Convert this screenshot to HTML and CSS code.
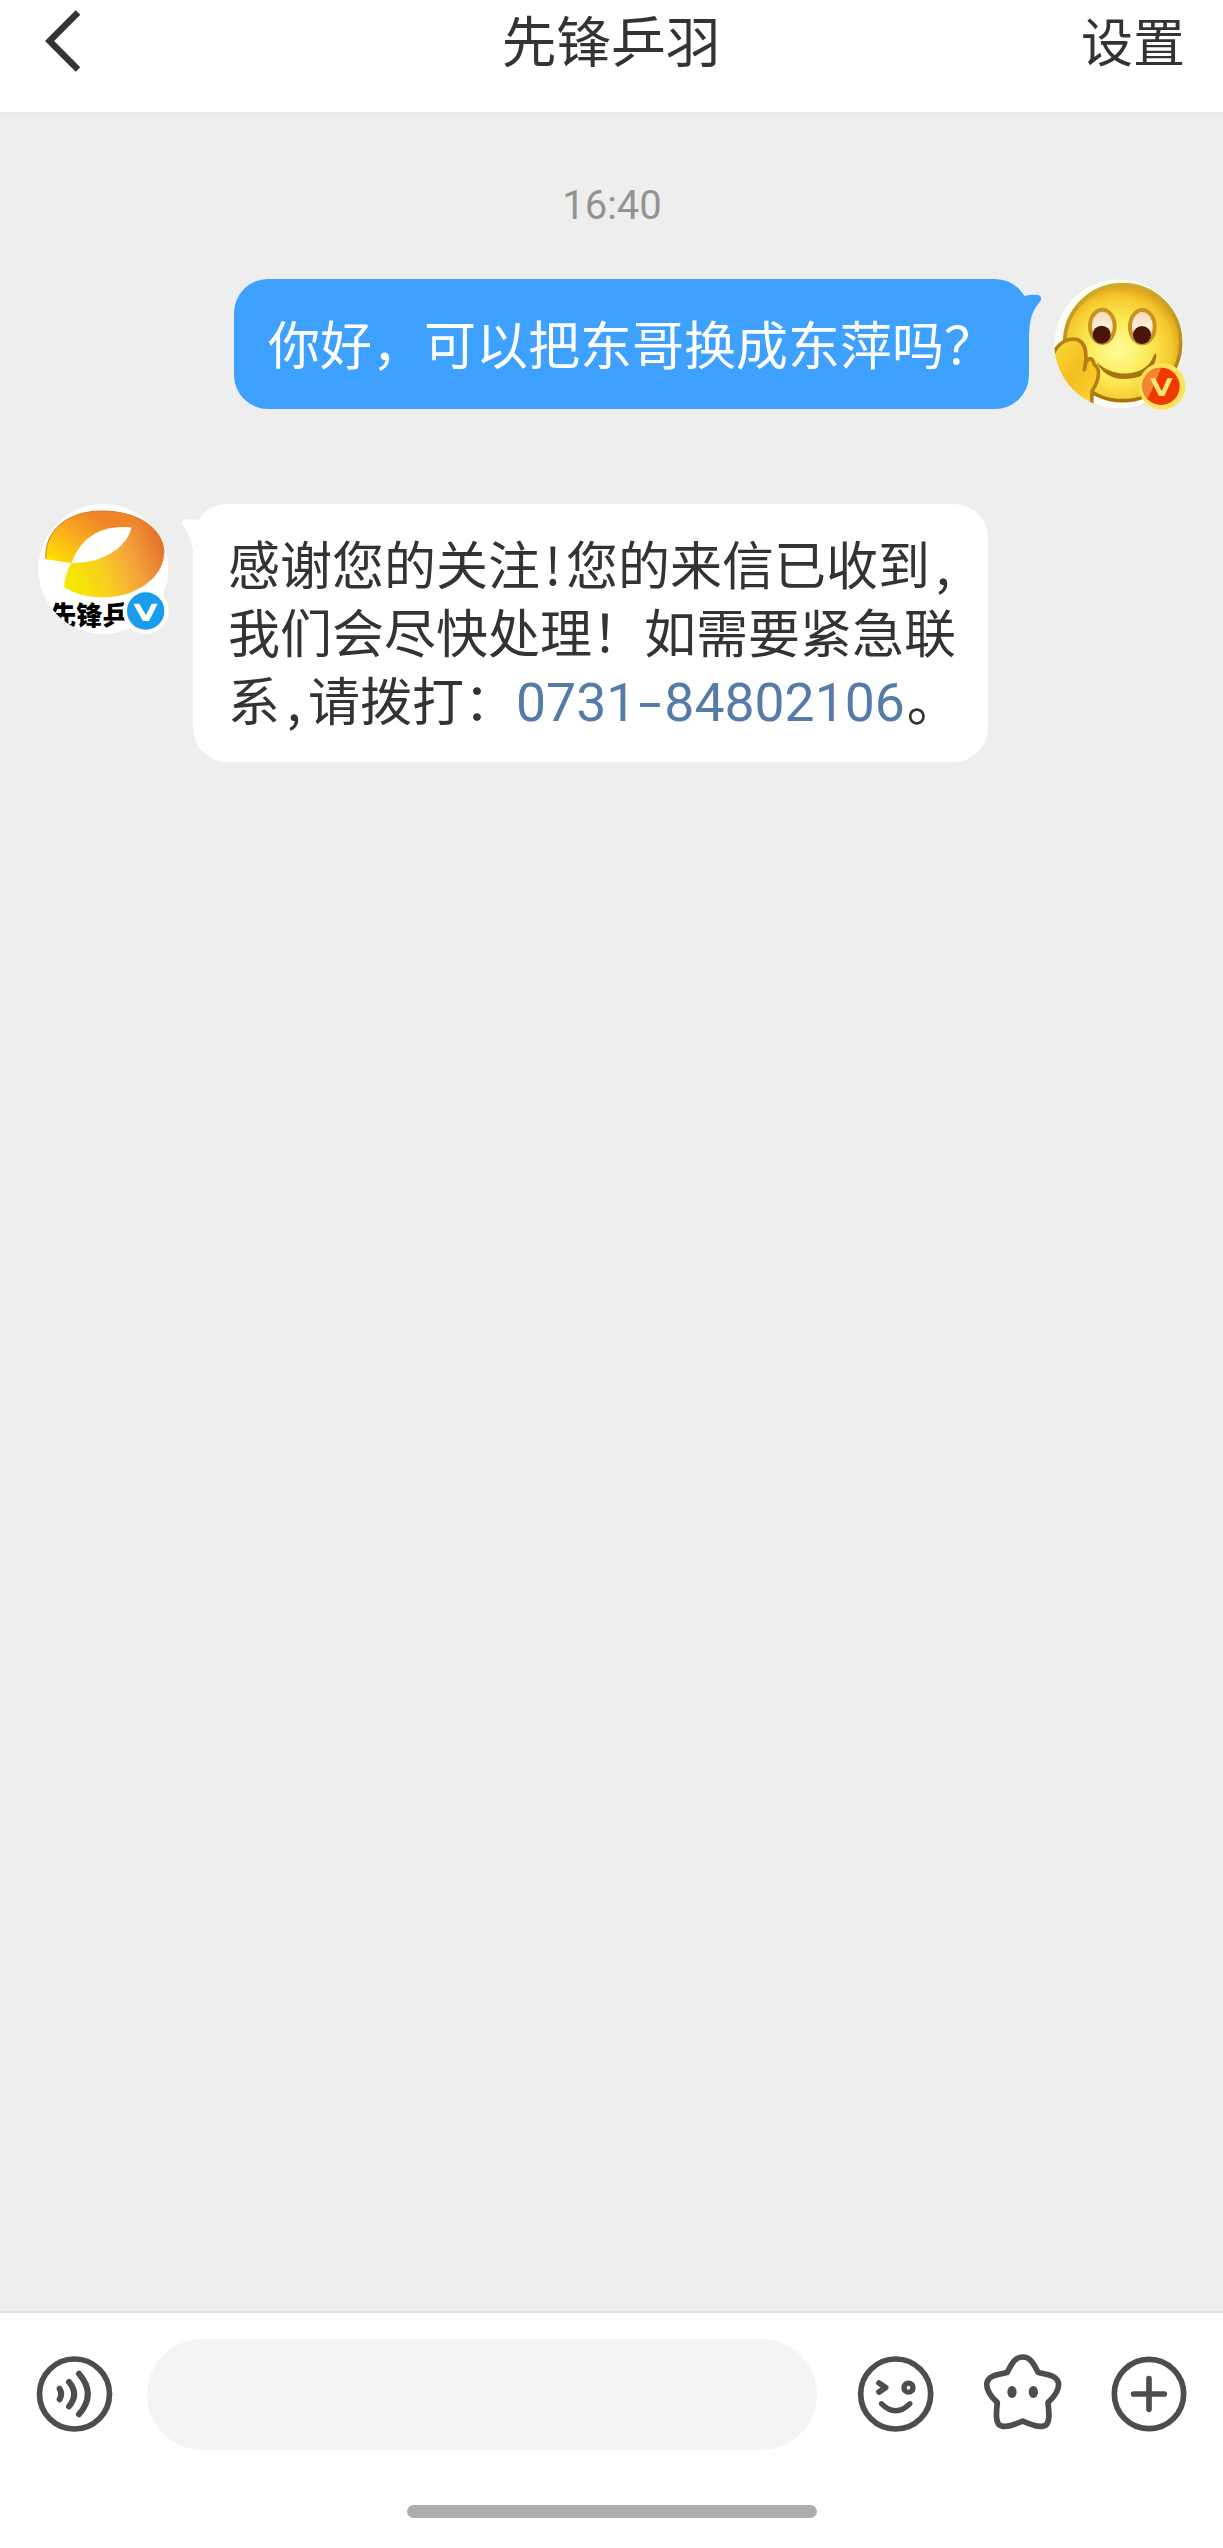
FILE: index.html
```html
<!DOCTYPE html>
<html lang="zh-CN">
<head>
<meta charset="utf-8">
<title>先锋乒羽</title>
<link rel="stylesheet" href="styles.css">
</head>
<body>
<div class="screen">
  <header class="topbar">
    <svg class="back" viewBox="0 0 40 66" aria-label="返回"><path d="M33 5.500 4.600 34 33 62.500"/></svg>
    <h1 class="title">先锋乒羽</h1>
    <span class="settings">设置</span>
  </header>

  <main class="chat">
    <time class="time">16:40</time>

    <div class="row sent">
      <div class="bubble blue">你好，可以把东哥换成东萍吗？
        <svg class="tail tail-right" viewBox="960 90 70 130"><path fill="#3fa1ff" d="M960 112C985 104 1000 104 1015 105Q1028 110 1021 124C1002 146 990 168 988 215H960Z"/></svg>
      </div>
      <svg class="avatar" viewBox="72 42 390 390">
        <defs>
          <clipPath id="me"><circle cx="267" cy="237" r="194"/></clipPath>
          <radialGradient id="face" cx="265" cy="255" r="190" gradientUnits="userSpaceOnUse">
            <stop offset="0" stop-color="#fffb9c"/><stop offset=".45" stop-color="#fdec5c"/><stop offset=".85" stop-color="#f5c82c"/><stop offset="1" stop-color="#e0a51c"/>
          </radialGradient>
          <linearGradient id="rim" x1="0" y1="0" x2="0" y2="1"><stop offset="0" stop-color="#cdac32"/><stop offset="1" stop-color="#a8720d"/></linearGradient>
          <linearGradient id="hand" x1="0" y1="0" x2="1" y2="1"><stop offset="0" stop-color="#f8dc3c"/><stop offset=".5" stop-color="#f5bd20"/><stop offset="1" stop-color="#f9dc35"/></linearGradient>
          <linearGradient id="eye" x1="0" y1="0" x2="0" y2="1"><stop offset="0" stop-color="#f3d5ae"/><stop offset=".5" stop-color="#fdf0dc"/><stop offset="1" stop-color="#e3ad58"/></linearGradient>
        </defs>
        <g clip-path="url(#me)">
          <circle cx="267" cy="237" r="194" fill="#fdfdf2"/>
          <circle cx="278" cy="233" r="174" fill="url(#face)" stroke="url(#rim)" stroke-width="11"/>
          <g fill="url(#eye)" stroke="#c7951f" stroke-width="12">
            <ellipse cx="217" cy="184" rx="37" ry="50"/><ellipse cx="337" cy="185" rx="37" ry="50"/>
          </g>
          <circle cx="215" cy="209" r="27" fill="#4b1409"/><circle cx="336" cy="210" r="27" fill="#4b1409"/>
          <path d="M200 290C248 342 350 338 372 270Q380 260 379 274C375 312 342 342 282 342C245 342 215 324 200 290Z" fill="#a8740e"/>
          <path d="M68 270C84 232 117 215 145 225C169 237 173 268 163 314C166 283 185 266 193 298C215 315 205 350 186 378L185 425H68Z" fill="url(#hand)" stroke="#b57f13" stroke-width="11" stroke-linejoin="round"/>
        </g>
        <circle cx="396" cy="364" r="70" fill="#fee25a"/>
        <circle cx="393" cy="364" r="56" fill="#ee3900"/>
        <path d="M393 308A56 56 0 0 0 352 402Q374 360 393 308Z" fill="#f58432"/>
        <path d="M360 340H376L395 379 412 340H428L403 393H387Z" fill="#ffe770"/>
      </svg>
    </div>

    <div class="row received">
      <svg class="avatar" viewBox="54 42 390 390">
        <defs>
          <clipPath id="them"><circle cx="250" cy="237" r="195"/></clipPath>
          <linearGradient id="swoosh" x1="150" y1="260" x2="425" y2="150" gradientUnits="userSpaceOnUse">
            <stop offset="0" stop-color="#f6e800"/><stop offset=".35" stop-color="#f8cc22"/><stop offset=".65" stop-color="#f5a23b"/><stop offset="1" stop-color="#e5702a"/>
          </linearGradient>
          <linearGradient id="top" x1="100" y1="215" x2="200" y2="60" gradientUnits="userSpaceOnUse">
            <stop offset="0" stop-color="#ffe000"/><stop offset=".45" stop-color="#fbb41c"/><stop offset="1" stop-color="#ef8526"/>
          </linearGradient>
        </defs>
        <circle cx="250" cy="237" r="195" fill="#fff"/>
        <path d="M78 207C71 125 140 63 245 63C360 63 432 120 432 190C432 260 350 322 254 322C207 322 165 313 132 290Q135 252 154 219Z" fill="url(#swoosh)"/>
        <path d="M78 207C71 125 140 63 245 63C300 63 325 76 350 96L334 112C240 108 180 155 154 219Z" fill="url(#top)"/>
        <path d="M78 207C71 125 140 63 245 63C360 63 432 120 432 190" fill="none" stroke="#df7420" stroke-width="3"/>
        <path d="M154 219C180 155 225 104 334 112C327 160 260 222 154 219Z" fill="#fff"/>
        <g clip-path="url(#them)"><text class="logo-text" x="90" y="406">先锋乒</text></g>
        <circle cx="377" cy="363" r="69" fill="#fff"/>
        <circle cx="377" cy="363" r="56" fill="#199ceb"/>
        <path d="M340 341H358L378 376 395 341H413L387 393H369Z" fill="#fff"/>
      </svg>
      <div class="bubble white">
        <svg class="tail tail-left" viewBox="0 80 70 130"><path fill="#fff" d="M70 92C45 92 29 89 17 90Q1 91 6 105C24 126 39 154 40 205H70Z"/></svg>
        感谢您的关注<span class="half">!</span>您的来信已收到<span class="half">,</span><br>我们会尽快处理！如需要紧急联<br>系<span class="half wide">,</span>请拨打：<a class="phone">0731<span class="dash">-</span>84802106</a>。
      </div>
    </div>
  </main>

  <footer class="composer">
    <div class="tools">
      <svg class="icon" viewBox="102 192 240 240">
        <circle cx="223.500" cy="312" r="105"/>
        <path class="bold" d="M179 296Q188 312 179 328M207 276Q238 312 207 349M237 251Q290 312 237 373"/>
      </svg>
      <div class="input"></div>
      <svg class="icon wink" viewBox="228 192 240 240">
        <circle cx="347" cy="312" r="105"/>
        <path d="M297 279 317 293 297 306" stroke-width="17"/>
        <circle cx="385.500" cy="293" r="13.500" stroke-width="16"/>
        <path d="M304 341Q347 384 390 341" stroke-width="15.500"/>
      </svg>
      <svg class="icon star" viewBox="606 192 240 240">
        <path d="M682 247C693 225 703 201 728 201C753 201 763 225 774 247C795 254 827 253 835 277C840 301 821 322 804 338C806 360 811 388 800 403C784 418 748 402 728 393C708 402 672 418 656 403C645 388 650 360 652 338C635 322 616 301 621 277C629 253 661 254 682 247Z"/>
        <ellipse class="dot" cx="696" cy="306" rx="14" ry="18"/><ellipse class="dot" cx="760" cy="306" rx="14" ry="18"/>
      </svg>
      <svg class="icon plus" viewBox="987 192 240 240">
        <circle cx="1107" cy="312" r="104"/>
        <path d="M1107 266V358M1061 312H1153"/>
      </svg>
    </div>
    <div class="handle"></div>
  </footer>
</div>
</body>
</html>
```
FILE: styles.css
```css
* { box-sizing: border-box; }

body {
  margin: 0;
  background: #fff;
  color: #333;
  font-family: "Noto Sans CJK SC", "Noto Sans", sans-serif;
}

.screen {
  display: flex;
  flex-direction: column;
  width: 1223px;
  height: 2548px;
}

.topbar {
  display: grid;
  grid-template-columns: 1fr auto 1fr;
  align-items: start;
  height: 112px;
  padding: 0 38px 0 37px;
}

.back {
  width: 40px;
  height: 66px;
  margin: 7px 0 0 8px;
  fill: none;
  stroke: #333;
  stroke-width: 6.5;
}

.title {
  margin: 0;
  font-size: 54.7px;
  font-weight: 400;
  line-height: 77px;
}

.settings {
  justify-self: end;
  font-size: 52px;
  line-height: 79px;
}

.chat {
  flex: 1;
  display: flex;
  flex-direction: column;
  padding: 60px 39px 0 38px;
  background: #eee;
  border-top: 1px solid #e9e9e9;
}

.time {
  align-self: center;
  height: 106px;
  padding-left: 2px;
  color: #939393;
  font-family: Roboto, "Noto Sans CJK SC", sans-serif;
  font-size: 40px;
  line-height: 66px;
}

.row {
  display: flex;
  align-items: flex-start;
  gap: 25px;
}

.sent { justify-content: flex-end; }
.received { margin-top: 95px; }

.avatar {
  flex: none;
  width: 130px;
  height: 130px;
  overflow: visible;
}

.logo-text {
  font-size: 79px;
  font-weight: 900;
  fill: #000;
}

.bubble {
  position: relative;
  width: 795px;
  border-radius: 34px;
  font-size: 52px;
  line-height: 68px;
  white-space: nowrap;
}

.blue {
  padding: 30px 33px 32px 34px;
  background: #3fa1ff;
  color: #fff;
}

.white {
  padding: 25px 35px 29px;
  background: #fff;
}

.tail {
  position: absolute;
  width: 23.333px;
  height: 43.333px;
}

.tail-right { top: 11px; left: 786px; }
.tail-left { top: 12px; left: -13px; }

.half {
  display: inline-block;
  width: 26px;
  text-align: center;
}

.wide { width: 28px; }

.phone {
  margin-right: 2px;
  color: #557ca8;
  font-family: Roboto, "Noto Sans CJK SC", sans-serif;
  font-size: 53.5px;
  line-height: 1;
}

.dash {
  display: inline-block;
  width: 28px;
  line-height: 1;
  text-align: center;
  transform: scaleX(1.55);
}

.composer {
  height: 237px;
  padding-top: 26px;
  background: #fff;
  border-top: 2px solid #e2e2e2;
}

.tools {
  display: flex;
  align-items: center;
  height: 111px;
  padding: 0 34px;
}

.input {
  width: 670px;
  height: 111px;
  margin: 0 39px 0 33px;
  border-radius: 56px;
  background: #f4f4f4;
}

.icon {
  width: 80px;
  height: 80px;
  margin-bottom: 1px;
  fill: none;
  stroke: #4d4d4d;
  stroke-width: 17;
  stroke-linecap: round;
  stroke-linejoin: round;
}

.bold { stroke-width: 18; }
.star { margin-left: 46px; }
.plus { margin-left: 47px; }
.dot { fill: #4d4d4d; stroke: none; }

.handle {
  width: 410px;
  height: 13px;
  margin: 55px auto 0;
  border-radius: 7px;
  background: #adadad;
}
```
